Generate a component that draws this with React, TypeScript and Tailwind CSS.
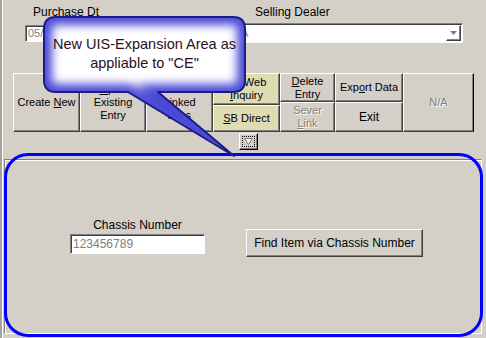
const BTN =
  "flex items-center justify-center text-center border border-t-white border-l-white border-b-[#404040] border-r-[#404040] shadow-[inset_-1px_-1px_0_#808080] leading-[13px]";
const SUNKEN =
  "border border-t-[#808080] border-l-[#808080] border-b-white border-r-white shadow-[inset_1px_1px_0_#404040]";
const DIS = "text-[#808080] [text-shadow:1px_1px_0_#fff]";

const CALLOUT =
  "M56,17 H233 Q245,17 245,29 V80 Q245,92 233,92 H158 L234,156 L128,92 H56 Q44,92 44,80 V29 Q44,17 56,17 Z";

const Callout: React.FC = () => (
  <>
    <svg className="absolute left-0 top-0 pointer-events-none" width="486" height="338">
      <defs>
        <clipPath id="cc">
          <path d={CALLOUT} />
        </clipPath>
        <filter id="bl" x="-20%" y="-20%" width="140%" height="140%">
          <feGaussianBlur stdDeviation="5" />
        </filter>
      </defs>
      <path d={CALLOUT} fill="#fff" />
      <g clipPath="url(#cc)">
        <path d={CALLOUT} fill="none" stroke="#4848d6" strokeWidth="16" filter="url(#bl)" />
      </g>
      <path d={CALLOUT} fill="none" stroke="#1c1c86" strokeWidth="2" strokeLinejoin="round" />
    </svg>
    <div className="absolute left-[44px] top-[35px] w-[201px] text-center text-[14.5px] leading-[19px] text-[#2a1020]">
      New UIS-Expansion Area as
      <br />
      appliable to "CE"
    </div>
  </>
);

export default function App() {
  return (
    <div className="relative w-[486px] h-[338px] overflow-hidden bg-[#d4d0c8] text-black text-[11px] font-['Liberation_Sans',Arial,sans-serif] shadow-[inset_2px_0_0_#a8a49c,inset_3px_0_0_#fff]">
      {/* top fields */}
      <div className="flex pt-[6px]">
        <div className="ml-[25px] w-[80px] flex flex-col">
          <div className="h-[13px] leading-[13px] pl-[8px] text-[12px]">Purchase Dt</div>
          <div className={`mt-[6px] h-[17px] bg-white px-[2px] leading-[14px] text-[#808080] ${SUNKEN}`}>
            05/12/2008
          </div>
        </div>
        <div className="ml-[121px] w-[237px] flex flex-col">
          <div className="h-[13px] leading-[13px] pl-[29px] text-[12px]">Selling Dealer</div>
          <div className={`mt-[4px] h-[20px] bg-white flex items-center justify-between pl-[3px] pr-[1px] text-[#808080] ${SUNKEN}`}>
            <span>N/A</span>
            <div className={`w-[15px] h-[16px] ${BTN}`}>
              <svg width="7" height="4" viewBox="0 0 7 4">
                <path d="M0 0 H7 L3.5 4 Z" fill="#808080" />
              </svg>
            </div>
          </div>
        </div>
      </div>

      {/* button row */}
      <div className="flex ml-[13px] mt-[30px] h-[59px] w-[461px]">
        <div className={`w-[67px] ${BTN}`}>
          <span>
            Create <u>N</u>ew
          </span>
        </div>
        <div className={`w-[66px] ${BTN}`}>
          <span>
            <u>O</u>pen
            <br />
            Existing
            <br />
            Entry
          </span>
        </div>
        <div className={`w-[67px] ${BTN}`}>
          <span>
            View
            <br />
            <u>L</u>inked
            <br />
            Jobs
          </span>
        </div>
        <div className="w-[67px] flex flex-col">
          <div className={`h-[32px] bg-[#dfdcb2] ${BTN}`}>
            <span>
              Do Web
              <br />
              <u>I</u>nquiry
            </span>
          </div>
          <div className={`h-[27px] bg-[#dfdcb2] ${BTN}`}>
            <span>
              <u>S</u>B Direct
            </span>
          </div>
        </div>
        <div className="w-[55px] flex flex-col">
          <div className={`h-[29px] ${BTN} leading-[12px]`}>
            <span>
              <u>D</u>elete
              <br />
              Entry
            </span>
          </div>
          <div className={`h-[30px] ${BTN} leading-[12px] ${DIS}`}>
            <span>
              Sever
              <br />
              <u>L</u>ink
            </span>
          </div>
        </div>
        <div className="w-[68px] flex flex-col">
          <div className={`h-[29px] ${BTN}`}>
            <span>
              Exp<u>o</u>rt Data
            </span>
          </div>
          <div className={`h-[30px] text-[12px] ${BTN}`}>Exit</div>
        </div>
        <div className={`w-[71px] border-r-black ${BTN} ${DIS}`}>N/A</div>
      </div>

      {/* small toggle button */}
      <div
        className={`ml-[239px] mt-[1px] w-[19px] h-[17px] p-[2px] border border-t-white border-l-white border-b-black border-r-black shadow-[inset_-1px_-1px_0_#808080]`}
      >
        <div className="w-full h-full border border-dotted border-black flex items-center justify-center">
          <svg width="9" height="7" viewBox="0 0 9 7">
            <path d="M0.5 0.5 H8.5 L4.5 6.5 Z" fill="#eeeeee" stroke="#808080" />
          </svg>
        </div>
      </div>

      {/* expansion area */}
      <div className="ml-[4px] mt-[9px] w-[478px] h-[175px] border border-t-[#808080] border-l-[#808080] border-b-white border-r-white shadow-[inset_1px_1px_0_#fff]">
        <div className="flex items-start">
          <div className="ml-[65px] mt-[59px] w-[135px] flex flex-col">
            <div className="h-[13px] leading-[13px] text-center text-[12px]">Chassis Number</div>
            <div className={`mt-[2px] h-[20px] bg-white px-[2px] flex items-center text-[12px] text-[#808080] ${SUNKEN}`}>
              123456789
            </div>
          </div>
          <div className={`ml-[41px] mt-[69px] w-[177px] h-[28px] text-[12px] ${BTN}`}>
            Find Item via Chassis Number
          </div>
        </div>
      </div>

      {/* annotation overlays */}
      <div className="absolute left-[4px] top-[153px] w-[479px] h-[184px] rounded-[24px] border-[3px] border-[#0000ff] pointer-events-none" />
      <Callout />
    </div>
  );
}
